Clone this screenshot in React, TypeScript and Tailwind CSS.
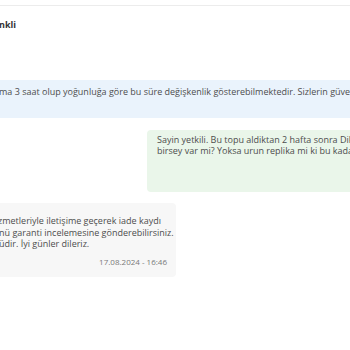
export default function App() {
  return (
    <div
      className="w-[350px] h-[350px] overflow-hidden bg-white text-[#4d4d4d]"
      style={{ fontFamily: "'Open Sans', 'Noto Sans', sans-serif" }}
    >
      {/* top divider */}
      <div className="mt-[5px] border-t border-[#ececec]" />

      {/* header */}
      <div className="pt-[13px] -ml-[1px] text-[9px] leading-[11px] font-bold text-[#333]">
        nkli
      </div>

      {/* info bubble */}
      <div className="mt-[50px] h-[38px] bg-[#eaf3fc] pt-[6px] text-[9px] leading-[11px] whitespace-nowrap">
        <span className="-ml-[1px] inline-block">
          ma 3 saat olup yoğunluğa göre bu süre değişkenlik gösterebilmektedir. Sizlerin güvenliğiniz için
        </span>
      </div>

      {/* customer message */}
      <div className="mt-[12px] ml-[147px] h-[62px] rounded-l-[4px] bg-[#eaf6ea] pl-[10px] pt-[4px] text-[9px] leading-[11px] whitespace-nowrap">
        <div>Sayin yetkili. Bu topu aldiktan 2 hafta sonra Dikişleri söküldü.</div>
        <div>birsey var mi? Yoksa urun replika mi ki bu kadar çabuk bozuldu</div>
      </div>

      {/* store reply */}
      <div className="mt-[11px] w-[176px] h-[74px] rounded-r-[4px] bg-[#f7f7f7] pt-[12px] text-[9px] leading-[11.5px] whitespace-nowrap">
        <div className="-ml-[2px]">zmetleriyle iletişime geçerek iade kaydı</div>
        <div className="-ml-[1px]">nü garanti incelemesine gönderebilirsiniz.</div>
        <div className="-ml-[1px]">üdir. İyi günler dileriz.</div>
        <div className="mt-[6px] pr-[9px] text-right text-[8px] leading-[11px] text-[#7a7a7a]">
          17.08.2024 - 16:46
        </div>
      </div>
    </div>
  );
}
